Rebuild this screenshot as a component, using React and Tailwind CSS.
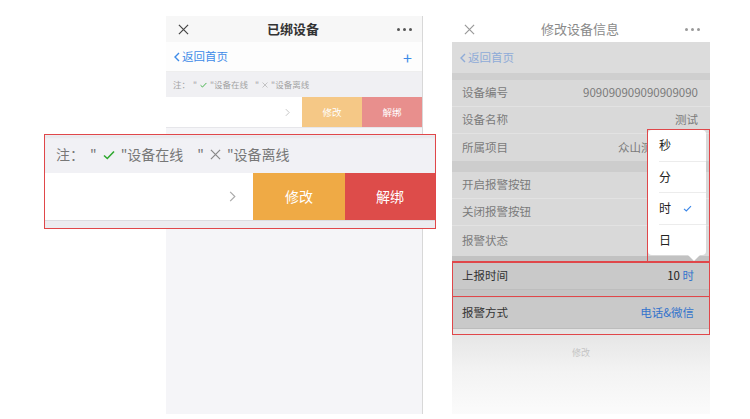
import React from 'react';

const font = { fontFamily: '"Noto Sans CJK SC", "Noto Sans", sans-serif' };

const XIcon = ({ className }) => (
  <svg viewBox="0 0 12 12" className={className} fill="none" stroke="currentColor" strokeWidth="1.3">
    <path d="M1 1L11 11M11 1L1 11" />
  </svg>
);

const Dots = ({ className }) => (
  <div className={`flex gap-[3px] ${className}`}>
    <span className="w-[3px] h-[3px] rounded-full bg-current" />
    <span className="w-[3px] h-[3px] rounded-full bg-current" />
    <span className="w-[3px] h-[3px] rounded-full bg-current" />
  </div>
);

const Check = ({ className }) => (
  <svg viewBox="0 0 12 10" className={className} fill="none" stroke="currentColor" strokeWidth="1.6">
    <path d="M1 5.5L4.3 8.5L11 1.5" />
  </svg>
);

const Chevron = ({ className }) => (
  <svg viewBox="0 0 6 10" className={className} fill="none" stroke="currentColor" strokeWidth="1">
    <path d="M1 1L5 5L1 9" />
  </svg>
);

const Back = ({ className }) => (
  <svg viewBox="0 0 6 10" className={className} fill="none" stroke="currentColor" strokeWidth="1.4">
    <path d="M5 1L1 5L5 9" />
  </svg>
);

// gray masked list row on the right phone
const InfoRow = ({ label, value, last }) => (
  <div className={`h-[27px] flex items-center justify-between pl-[10px] pr-[12px] bg-[#d9d9d9] ${last ? '' : 'border-b border-[#e2e2e2]'}`}>
    <span className="text-[11.5px] text-[#7b7b7b]">{label}</span>
    <span className="text-[11.5px] text-[#7b7b7b]">{value}</span>
  </div>
);

export default function App() {
  return (
    <div className="w-[750px] h-[419px] bg-white relative flex overflow-hidden" style={font}>
      {/* left phone */}
      <div className="ml-[166px] mt-[16px] w-[257px] h-[398px] flex flex-col bg-[#f5f5f8] border-r border-[#d8d8d8]">
        <div className="h-[26px] bg-[#f7f7f7] flex items-center justify-between pl-[12px] pr-[10px]">
          <XIcon className="w-[11px] h-[11px] text-[#444]" />
          <span className="text-[13px] font-bold text-[#333]">已绑设备</span>
          <Dots className="text-[#555]" />
        </div>
        <div className="h-[30px] bg-[#fdfdfd] flex items-center justify-between pl-[8px] pr-[10px] border-b border-[#eeeeee]">
          <div className="flex items-center gap-[2px] text-[#3d8be8]">
            <Back className="w-[6px] h-[10px]" />
            <span className="text-[11.5px]">返回首页</span>
          </div>
          <span className="text-[16px] leading-none text-[#3d8be8]">+</span>
        </div>
        <div className="h-[25px] bg-[#f0f0f3] flex items-center pl-[7px] text-[8.5px] text-[#a3a3a3] gap-[3px]">
          <span>注：</span>
          <span>"</span>
          <Check className="w-[7px] h-[6px] text-[#3cb043]" />
          <span>"设备在线</span>
          <span className="ml-[4px]">"</span>
          <XIcon className="w-[6px] h-[6px] text-[#aaa]" />
          <span>"设备离线</span>
        </div>
        <div className="h-[30px] flex">
          <div className="flex-1 bg-white flex items-center justify-end pr-[12px]">
            <Chevron className="w-[5px] h-[9px] text-[#bbb]" />
          </div>
          <div className="w-[60px] bg-[#f5c886] flex items-center justify-center text-[9.5px] text-white">修改</div>
          <div className="w-[60px] bg-[#e88f8d] flex items-center justify-center text-[9.5px] text-white">解绑</div>
        </div>
        <div className="h-px bg-[#e6e6ea]" />
      </div>

      {/* right phone */}
      <div className="ml-[29px] mt-[16px] w-[258px] h-[398px] flex flex-col">
        <div className="h-[26px] bg-white flex items-center justify-between pl-[12px] pr-[10px]">
          <XIcon className="w-[11px] h-[11px] text-[#999]" />
          <span className="text-[13px] text-[#8a8a8a]">修改设备信息</span>
          <Dots className="text-[#999]" />
        </div>
        <div className="h-[31px] bg-[#dcdcdc] flex items-center pl-[8px] gap-[2px] text-[#8eabd8]">
          <Back className="w-[6px] h-[10px]" />
          <span className="text-[11.5px]">返回首页</span>
        </div>
        <div className="h-[7px] bg-[#cfcfcf]" />
        <InfoRow label="设备编号" value="909090909090909090" />
        <InfoRow label="设备名称" value="测试" />
        <div className="h-[27px] flex items-center justify-between pl-[10px] pr-[63px] bg-[#d9d9d9]">
          <span className="text-[11.5px] text-[#7b7b7b]">所属项目</span>
          <span className="w-[29px] overflow-hidden whitespace-nowrap text-[11.5px] text-[#7b7b7b]">众山测试</span>
        </div>
        <div className="h-[11px] bg-[#cdcdcd]" />
        <InfoRow label="开启报警按钮" value="" />
        <InfoRow label="关闭报警按钮" value="" />
        <div className="h-[30px] flex items-center pl-[10px] bg-[#d9d9d9]">
          <span className="text-[11.5px] text-[#7b7b7b]">报警状态</span>
        </div>
        <div className="h-[6px] bg-[#c2c2c2]" />
        <div className="h-[28px] bg-[#c9c9c9] flex items-center justify-between pl-[10px] pr-[16px] border-b border-[#bdbdbd]">
          <span className="text-[11.5px] text-[#333]">上报时间</span>
          <span className="text-[11.5px] text-[#222]">10 <span className="text-[#3474cc]">时</span></span>
        </div>
        <div className="h-[8px] bg-[#c4c4c4]" />
        <div className="h-[31px] bg-[#c9c9c9] flex items-center justify-between pl-[10px] pr-[16px] border-b border-[#bcbcbc]">
          <span className="text-[11.5px] text-[#333]">报警方式</span>
          <span className="text-[11.5px] text-[#3474cc]">电话&amp;微信</span>
        </div>
        <div className="flex-1 bg-gradient-to-b from-[#e4e4e4] via-[#f3f3f3] to-[#fbfbfb] flex justify-center pt-[17px]">
          <span className="text-[9px] text-[#c4c4c4]">修改</span>
        </div>
      </div>

      {/* popup menu over right phone */}
      <div className="absolute left-[648px] top-[130px] w-[58px] h-[125px] bg-white rounded-[4px] flex flex-col pl-[11px]">
        {['秒', '分', '时', '日'].map((t, i) => (
          <div key={t} className={`flex-1 flex items-center gap-[12px] ${i < 3 ? 'border-b border-[#ececec]' : ''}`}>
            <span className="text-[12px] text-[#222]">{t}</span>
            {t === '时' && <Check className="w-[9px] h-[7px] text-[#3a86e8]" />}
          </div>
        ))}
        <div className="absolute left-[39px] bottom-[-6px] w-0 h-0 border-l-[7px] border-r-[7px] border-t-[7px] border-l-transparent border-r-transparent border-t-white" />
      </div>

      {/* red outlines */}
      <div className="absolute left-[647px] top-[129px] w-[63px] h-[133px] border border-[#e0474a]" />
      <div className="absolute left-[452px] top-[261px] w-[196px] h-px bg-[#e0474a]" />
      <div className="absolute left-[452px] top-[262px] w-[258px] h-[35px] border border-[#e0474a]" />
      <div className="absolute left-[452px] top-[296px] w-[258px] h-[39px] border border-[#e0474a]" />

      {/* magnified callout */}
      <div className="absolute left-[44px] top-[134px] w-[392px] h-[95px] border border-[#e0474a] bg-[#ececf0] flex flex-col">
        <div className="h-[37px] mt-[1px] bg-[#f1f1f5] flex items-center pl-[11px] gap-[6px] text-[14px] text-[#777] shadow-[inset_0_2px_2px_rgba(0,0,0,0.04)]">
          <span>注：</span>
          <span>"</span>
          <Check className="w-[12px] h-[10px] text-[#2fa82f]" />
          <span>"设备在线</span>
          <span className="ml-[8px]">"</span>
          <XIcon className="w-[11px] h-[11px] text-[#888]" />
          <span>"设备离线</span>
        </div>
        <div className="h-[48px] flex border-b border-[#dcdce0]">
          <div className="flex-1 bg-white flex items-center justify-end pr-[17px]">
            <Chevron className="w-[7px] h-[13px] text-[#aaa]" />
          </div>
          <div className="w-[92px] bg-[#efaa45] flex items-center justify-center text-[14px] text-white">修改</div>
          <div className="w-[90px] bg-[#dd4c4a] flex items-center justify-center text-[14px] text-white">解绑</div>
        </div>
      </div>
    </div>
  );
}
